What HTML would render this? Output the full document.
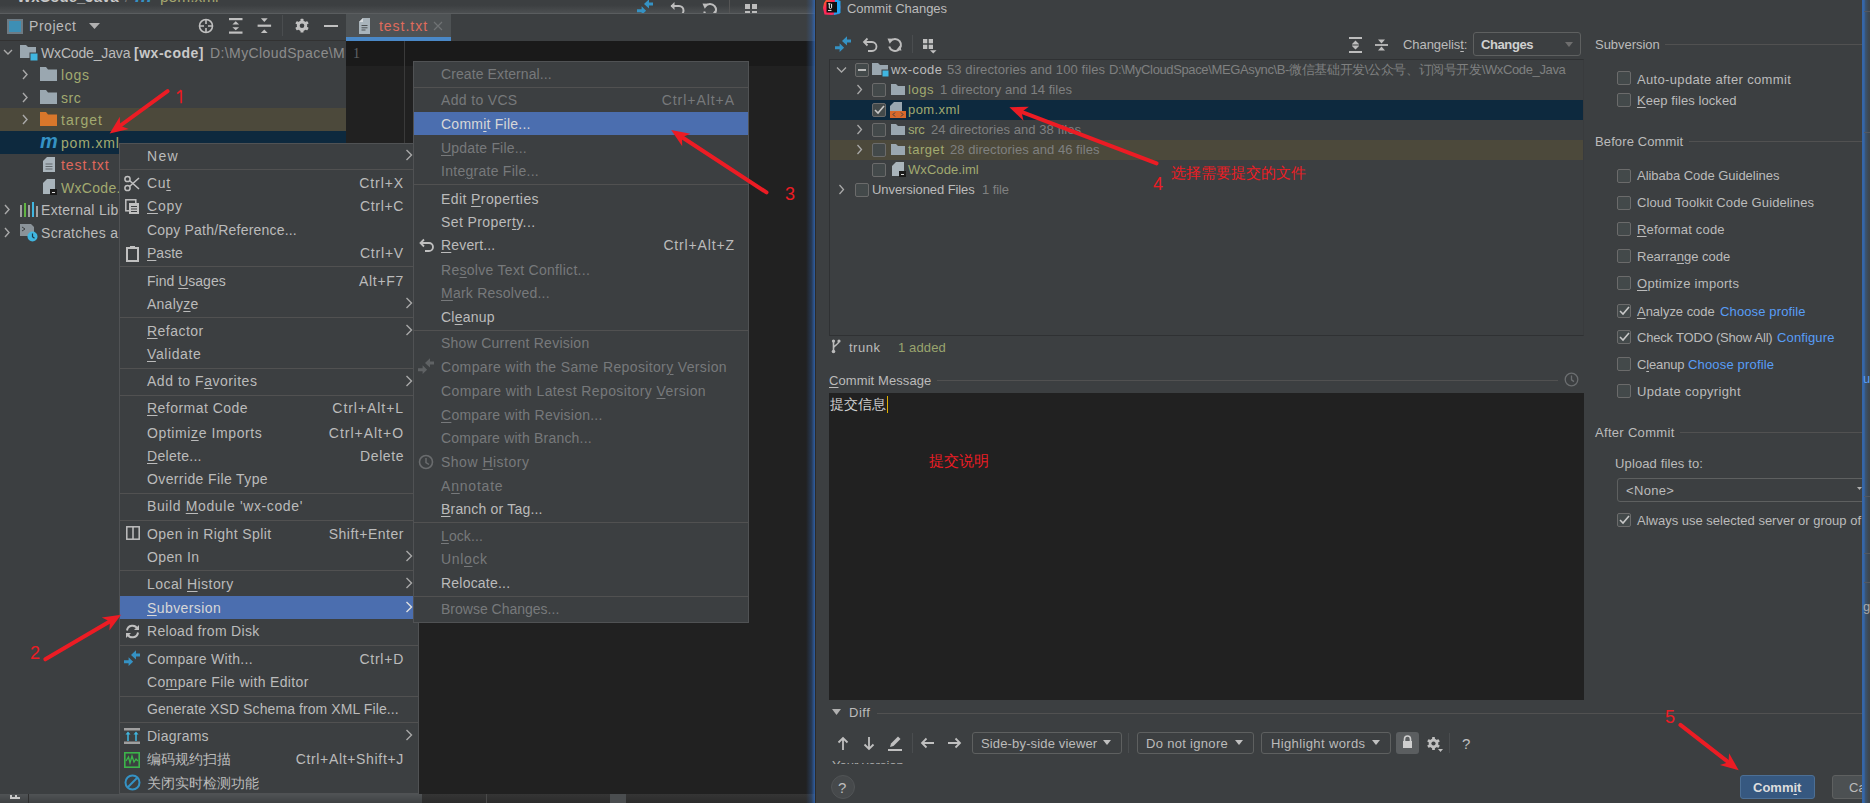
<!DOCTYPE html>
<html><head><meta charset="utf-8">
<style>
*{margin:0;padding:0;box-sizing:border-box}
html,body{width:1870px;height:803px;overflow:hidden;background:#3c3f41}
body{position:relative;font-family:"Liberation Sans",sans-serif;font-size:14px;color:#bbbbbb}
.a{position:absolute}
.t{position:absolute;white-space:nowrap;line-height:18px;height:18px}
.sep{position:absolute;height:1px;background:#515151}
u{text-decoration:underline;text-underline-offset:2px;text-decoration-thickness:1px}
.dis{color:#787b7d}
.sc{position:absolute;white-space:nowrap;line-height:18px;text-align:right}
.cb{position:absolute;width:14px;height:14px;border:1px solid #6b6b6b;border-radius:2px;background:#43494a}
.grn{color:#a2aa70}
.red{color:#e0685c}
.link{color:#589df6}
svg{position:absolute;overflow:visible}
</style></head><body>

<!-- ================= LEFT IDE ================= -->
<div class="a" id="ide" style="left:0;top:0;width:816px;height:803px;background:#3c3f41;overflow:hidden">
  <!-- breadcrumb bar -->
  <div class="a" style="left:0;top:0;width:816px;height:13px;background:linear-gradient(#3c3f41 40%,#4c4f51)"></div>
  <div class="a" style="left:0;top:13px;width:816px;height:1px;background:#5a5d5f"></div>
  <!-- project header -->
  <div class="a" style="left:0;top:14px;width:346px;height:26px;background:#3c3f41"></div>
  <div class="a" style="left:0;top:40px;width:346px;height:1px;background:#323232"></div>
  <!-- tab bar -->
  <div class="a" style="left:346px;top:14px;width:470px;height:27px;background:#3c3f41"></div>
  <div class="a" style="left:346px;top:14px;width:105px;height:24px;background:#4e5254"></div>
  <div class="a" style="left:346px;top:37px;width:105px;height:4px;background:#4a88c7"></div>
  <!-- editor -->
  <div class="a" style="left:346px;top:41px;width:470px;height:753px;background:#212121"></div>
  <div class="a" style="left:346px;top:41px;width:470px;height:25px;background:#1a1a1a"></div>
  <div class="a" style="left:404px;top:41px;width:1px;height:753px;background:#3a3a3a"></div>
  <!-- status bar -->
  <div class="a" style="left:0;top:794px;width:816px;height:9px;background:linear-gradient(#505355,#3e4143)"></div>
  <div class="a" style="left:422px;top:794px;width:394px;height:9px;background:linear-gradient(#353535,#2b2b2b)"></div>
  <div class="a" style="left:486px;top:794px;width:1px;height:9px;background:#4a4a4a"></div>
  <div class="a" style="left:610px;top:794px;width:16px;height:9px;background:#4a4d4f"></div>
  <div class="a" style="left:28px;top:794px;width:1px;height:9px;background:#2e2e2e"></div>
  <div class="a" style="left:10px;top:795px;width:1.5px;height:3px;background:#c8c8c8"></div><div class="a" style="left:15px;top:795px;width:1.5px;height:3px;background:#c8c8c8"></div><div class="a" style="left:10px;top:797px;width:10px;height:1.5px;background:#c8c8c8"></div>

  <!-- breadcrumb text (cut off at top) -->
  <div class="t" style="left:17px;top:-12px;font-weight:bold;color:#c8c8c8;font-size:15px">WxCode_Java</div>
  <div class="t" style="left:125px;top:-12px;color:#7a7a7a">/</div>
  <div class="t" style="left:135px;top:-13px;color:#3592c4;font-weight:bold;font-style:italic;font-size:19px">m</div>
  <div class="t" style="left:160px;top:-12px;color:#a4a66e;font-size:15.5px">pom.xml</div>
  <!-- top right toolbar icons (cut) -->
  <div class="a" style="left:600px;top:0;width:200px;height:13px;overflow:hidden">
  <svg style="left:37px;top:-1px" width="17" height="14"><path d="M7 4.9 L12 0.3 L12 3.5 L16 3.5 L16 6.5 L12 6.5 L12 9.4Z M9.1 11.7 L4.6 7.2 L4.6 10.2 L0 10.2 L0 13.2 L4.6 13.2 L4.6 16Z" fill="#3592c4"/></svg>
  <svg style="left:69px;top:1px" width="16" height="15"><path d="M2 5h8a4.5 4.5 0 0 1 0 9H6" stroke="#bdbdbd" stroke-width="2" fill="none"/><path d="M5.5 1 L1.5 5 L5.5 9z" fill="#bdbdbd"/></svg>
  <svg style="left:102px;top:2px" width="16" height="15"><path d="M3.3 4.2 A6 6 0 1 1 2.2 9.5" stroke="#bdbdbd" stroke-width="2" fill="none"/><path d="M0.5 1.5 L6.5 1.8 L2.8 6.8z" fill="#bdbdbd"/><path d="M14.5 13.5 L9.2 13.3 L12.8 8.6z" fill="#bdbdbd"/></svg>
  <div class="a" style="left:129px;top:0;width:1px;height:13px;background:#555"></div>
  <div class="a" style="left:145px;top:4px;width:5px;height:5px;background:#bdbdbd"></div>
  <div class="a" style="left:152px;top:4px;width:5px;height:5px;background:#bdbdbd"></div>
  <div class="a" style="left:145px;top:11px;width:5px;height:2px;background:#bdbdbd"></div>
  <div class="a" style="left:152px;top:11px;width:5px;height:2px;background:#bdbdbd"></div>

    </div>
  <!-- project header -->
  <div class="a" style="left:7px;top:19px;width:16px;height:15px;border:2px solid #6e7b84;background:#3d8fb5"></div>
  <div class="t" style="left:29px;top:17px;color:#bbbbbb;letter-spacing:0.54px">Project</div>
  <svg style="left:89px;top:23px" width="12" height="8"><path d="M0 0 h11 l-5.5 6z" fill="#b0b0b0"/></svg>
  <svg style="left:198px;top:18px" width="16" height="16"><circle cx="8" cy="8" r="6.5" stroke="#c0c0c0" stroke-width="1.6" fill="none"/><path d="M8 1v5M8 10v5M1 8h5M10 8h5" stroke="#c0c0c0" stroke-width="1.6"/></svg>
  <svg style="left:228px;top:17px" width="16" height="17"><rect x="1" y="1" width="13.5" height="2.2" fill="#c0c0c0"/><rect x="1" y="14.5" width="13.5" height="2.2" fill="#c0c0c0"/><path d="M7.75 4.3L4.4 7.4h6.7zM7.75 13.3L4.4 10.2h6.7z" fill="#c0c0c0"/></svg>
  <svg style="left:257px;top:17px" width="16" height="17"><rect x="0.6" y="7.6" width="13.5" height="2.2" fill="#c0c0c0"/><path d="M3.9 1.3h6.8l-3.4 3.6zM3.9 16h6.8l-3.4-3.6z" fill="#c0c0c0"/></svg>
  <div class="a" style="left:282px;top:15px;width:1px;height:21px;background:#4a4d4f"></div>
  <svg style="left:294px;top:18px" width="16" height="16"><g fill="#c0c0c0"><circle cx="8" cy="7.7" r="5.2"/><rect x="6.5" y="0.8" width="3" height="13.8" rx=".6"/><rect x="6.5" y="0.8" width="3" height="13.8" rx=".6" transform="rotate(60 8 7.7)"/><rect x="6.5" y="0.8" width="3" height="13.8" rx=".6" transform="rotate(120 8 7.7)"/></g><circle cx="8" cy="7.7" r="2.3" fill="#3c3f41"/></svg>
  <div class="a" style="left:324px;top:24.5px;width:14px;height:2.5px;background:#c0c0c0"></div>

  <!-- tab -->
  <svg style="left:359px;top:18px" width="12" height="16"><path d="M4 0h7v16H0V4z" fill="#a9b4bb"/><path d="M0 4h4V0" fill="#d6dadd"/><path d="M2.5 7.5h6M2.5 9.8h6M2.5 12h4" stroke="#4e5254" stroke-width="1"/></svg>
  <div class="t" style="left:379px;top:17px;color:#e06c5c;font-size:14px;letter-spacing:0.97px">test.txt</div>
  <svg style="left:433px;top:21px" width="10" height="10"><path d="M1 1l8 8M9 1l-8 8" stroke="#6f7274" stroke-width="1.2"/></svg>

  <!-- editor line number -->
  <div class="t" style="left:353px;top:45px;color:#606366;font-family:'Liberation Serif',serif;font-size:14px">1</div>

  <!-- tree rows -->
  <div class="a" style="left:0;top:108px;width:346px;height:23px;background:#4c493b"></div>
  <div class="a" style="left:0;top:131px;width:346px;height:23px;background:#0d293e"></div>

  <svg style="left:3px;top:47px" width="10" height="10"><path d="M1 3l4 4 4-4" stroke="#a9a9a9" stroke-width="1.4" fill="none"/></svg>
  <svg style="left:20px;top:44px" width="18" height="17"><path d="M0 1h6l2 2h8v11H0z" fill="#9aa7b0"/><rect x="10" y="9" width="8" height="8" fill="#40b6e0" stroke="#3c3f41" stroke-width="1"/></svg>
  <div class="t" style="left:41px;top:44px;letter-spacing:-0.16px">WxCode_Java</div><div class="t" style="left:134px;top:44px;font-weight:bold;color:#c9c9c9;letter-spacing:0.52px">[wx-code]</div><div class="t" style="left:210px;top:44px;width:136px;overflow:hidden;color:#8c8c8c;letter-spacing:.4px">D:\MyCloudSpace\MEGAsync</div>

  <svg style="left:21px;top:69px" width="8" height="11"><path d="M2 1l4 4.5-4 4.5" stroke="#a9a9a9" stroke-width="1.4" fill="none"/></svg>
  <svg style="left:40px;top:67px" width="17" height="14"><path d="M0 0h6l2 2.5h9V14H0z" fill="#9aa7b0"/></svg>
  <div class="t grn" style="left:61px;top:66px;letter-spacing:0.80px">logs</div>

  <svg style="left:21px;top:92px" width="8" height="11"><path d="M2 1l4 4.5-4 4.5" stroke="#a9a9a9" stroke-width="1.4" fill="none"/></svg>
  <svg style="left:40px;top:90px" width="17" height="14"><path d="M0 0h6l2 2.5h9V14H0z" fill="#9aa7b0"/></svg>
  <div class="t grn" style="left:61px;top:89px;letter-spacing:0.51px">src</div>

  <svg style="left:21px;top:114px" width="8" height="11"><path d="M2 1l4 4.5-4 4.5" stroke="#a9a9a9" stroke-width="1.4" fill="none"/></svg>
  <svg style="left:40px;top:112px" width="17" height="14"><path d="M0 0h6l2 2.5h9V14H0z" fill="#d9772b"/></svg>
  <div class="t grn" style="left:61px;top:111px;letter-spacing:1.02px">target</div>

  <div class="t" style="left:40px;top:131px;color:#3592c4;font-weight:bold;font-style:italic;font-size:20px;line-height:20px;height:20px;letter-spacing:-1px">m</div>
  <div class="t grn" style="left:61px;top:134px;letter-spacing:0.82px">pom.xml</div>

  <svg style="left:43px;top:157px" width="12" height="15"><path d="M4 0h8v15H0V4z" fill="#a9b4bb"/><path d="M2.5 7h7M2.5 9.5h7M2.5 12h7" stroke="#60676b" stroke-width="1"/></svg>
  <div class="t red" style="left:61px;top:156px;letter-spacing:0.91px">test.txt</div>

  <svg style="left:43px;top:179px" width="14" height="16"><path d="M4 0h8v15H0V4z" fill="#a9b4bb"/><rect x="7" y="10" width="7" height="6" fill="#1b1b1b"/><rect x="9" y="13" width="3" height="1" fill="#ddd"/></svg>
  <div class="t grn" style="left:61px;top:179px;letter-spacing:.3px">WxCode.iml</div>

  <svg style="left:3px;top:204px" width="8" height="11"><path d="M2 1l4 4.5-4 4.5" stroke="#a9a9a9" stroke-width="1.4" fill="none"/></svg>
  <svg style="left:20px;top:202px" width="18" height="15"><rect x="0" y="3" width="2" height="12" fill="#a0a0a0"/><rect x="4" y="1" width="2" height="14" fill="#62b543"/><rect x="8" y="3" width="2" height="12" fill="#a0a0a0"/><rect x="12" y="0" width="2" height="15" fill="#40b6e0"/><rect x="16" y="4" width="2" height="11" fill="#a0a0a0"/></svg>
  <div class="t" style="left:41px;top:201px;letter-spacing:.3px">External Libraries</div>

  <svg style="left:3px;top:227px" width="8" height="11"><path d="M2 1l4 4.5-4 4.5" stroke="#a9a9a9" stroke-width="1.4" fill="none"/></svg>
  <svg style="left:20px;top:224px" width="18" height="18"><path d="M0 0h11l3 3v9H0z" fill="#8a9399"/><path d="M2 3l3 2-3 2" stroke="#3c3f41" stroke-width="1" fill="none"/><circle cx="12.5" cy="12.5" r="5" fill="#40b6e0"/><path d="M12.5 9.5v3.2l2 1.5" stroke="#1b3a4a" stroke-width="1.2" fill="none"/></svg>
  <div class="t" style="left:41px;top:224px;letter-spacing:.3px">Scratches and Consoles</div>

<!-- MENUS -->
<div class="a" style="left:119px;top:143px;width:300px;height:651px;background:#3c3f41;border:1px solid #505254"></div>
<div class="t" style="left:147px;top:147px;color:#bbbbbb;letter-spacing:1.29px">New</div>
<svg style="left:405px;top:149px" width="8" height="12"><path d="M1.5 1l5 5-5 5" stroke="#a9a9a9" stroke-width="1.4" fill="none"/></svg>
<div class="sep" style="left:120px;top:169px;width:298px"></div>
<svg style="left:124px;top:175px" width="17" height="17"><circle cx="3.5" cy="13" r="2.6" stroke="#c0c0c0" stroke-width="1.5" fill="none"/><circle cx="3.5" cy="4" r="2.6" stroke="#c0c0c0" stroke-width="1.5" fill="none"/><path d="M5.5 5.5 L15 14 M5.5 11.5 L15 3" stroke="#c0c0c0" stroke-width="1.6"/></svg>
<div class="t" style="left:147px;top:174px;color:#bbbbbb;letter-spacing:0.70px">Cu<u>t</u></div>
<div class="sc" style="right:412px;top:174px;letter-spacing:0.90px">Ctrl+X</div>
<svg style="left:125px;top:199px" width="16" height="16"><rect x="0.8" y="0.8" width="10" height="11" stroke="#c0c0c0" stroke-width="1.5" fill="none"/><rect x="4" y="4" width="10" height="11" fill="#c0c0c0"/><path d="M6 7.5h6M6 10h6M6 12.5h6" stroke="#3c3f41" stroke-width="1"/></svg>
<div class="t" style="left:147px;top:197px;color:#bbbbbb;letter-spacing:0.80px"><u>C</u>opy</div>
<div class="sc" style="right:412px;top:197px;letter-spacing:0.65px">Ctrl+C</div>
<div class="t" style="left:147px;top:221px;color:#bbbbbb;letter-spacing:0.20px">Copy Path/Reference...</div>
<svg style="left:126px;top:246px" width="14" height="16"><rect x="1" y="2" width="11" height="13" stroke="#c0c0c0" stroke-width="2" fill="none"/><rect x="4" y="0" width="5" height="3" fill="#c0c0c0"/></svg>
<div class="t" style="left:147px;top:244px;color:#bbbbbb;letter-spacing:0.02px"><u>P</u>aste</div>
<div class="sc" style="right:412px;top:244px;letter-spacing:0.80px">Ctrl+V</div>
<div class="sep" style="left:120px;top:266px;width:298px"></div>
<div class="t" style="left:147px;top:272px;color:#bbbbbb;letter-spacing:0.01px">Find <u>U</u>sages</div>
<div class="sc" style="right:412px;top:272px;letter-spacing:0.69px">Alt+F7</div>
<div class="t" style="left:147px;top:295px;color:#bbbbbb;letter-spacing:0.25px">Analy<u>z</u>e</div>
<svg style="left:405px;top:297px" width="8" height="12"><path d="M1.5 1l5 5-5 5" stroke="#a9a9a9" stroke-width="1.4" fill="none"/></svg>
<div class="sep" style="left:120px;top:317px;width:298px"></div>
<div class="t" style="left:147px;top:322px;color:#bbbbbb;letter-spacing:0.48px"><u>R</u>efactor</div>
<svg style="left:405px;top:324px" width="8" height="12"><path d="M1.5 1l5 5-5 5" stroke="#a9a9a9" stroke-width="1.4" fill="none"/></svg>
<div class="t" style="left:147px;top:345px;color:#bbbbbb;letter-spacing:0.60px"><u>V</u>alidate</div>
<div class="sep" style="left:120px;top:368px;width:298px"></div>
<div class="t" style="left:147px;top:372px;color:#bbbbbb;letter-spacing:0.53px">Add to F<u>a</u>vorites</div>
<svg style="left:405px;top:375px" width="8" height="12"><path d="M1.5 1l5 5-5 5" stroke="#a9a9a9" stroke-width="1.4" fill="none"/></svg>
<div class="sep" style="left:120px;top:395px;width:298px"></div>
<div class="t" style="left:147px;top:399px;color:#bbbbbb;letter-spacing:0.47px"><u>R</u>eformat Code</div>
<div class="sc" style="right:412px;top:399px;letter-spacing:0.94px">Ctrl+Alt+L</div>
<div class="t" style="left:147px;top:424px;color:#bbbbbb;letter-spacing:0.60px">Optimi<u>z</u>e Imports</div>
<div class="sc" style="right:412px;top:424px;letter-spacing:0.98px">Ctrl+Alt+O</div>
<div class="t" style="left:147px;top:447px;color:#bbbbbb;letter-spacing:0.29px"><u>D</u>elete...</div>
<div class="sc" style="right:412px;top:447px;letter-spacing:0.57px">Delete</div>
<div class="t" style="left:147px;top:470px;color:#bbbbbb;letter-spacing:0.38px">Override File Type</div>
<div class="sep" style="left:120px;top:493px;width:298px"></div>
<div class="t" style="left:147px;top:497px;color:#bbbbbb;letter-spacing:0.62px">Build <u>M</u>odule 'wx-code'</div>
<div class="sep" style="left:120px;top:520px;width:298px"></div>
<svg style="left:126px;top:526px" width="14" height="14"><rect x="0.8" y="0.8" width="12.4" height="12.4" stroke="#c0c0c0" stroke-width="1.5" fill="none"/><path d="M7 1v12" stroke="#c0c0c0" stroke-width="1.5"/></svg>
<div class="t" style="left:147px;top:525px;color:#bbbbbb;letter-spacing:0.41px">Open in Right Split</div>
<div class="sc" style="right:412px;top:525px;letter-spacing:0.52px">Shift+Enter</div>
<div class="t" style="left:147px;top:548px;color:#bbbbbb;letter-spacing:0.38px">Open In</div>
<svg style="left:405px;top:550px" width="8" height="12"><path d="M1.5 1l5 5-5 5" stroke="#a9a9a9" stroke-width="1.4" fill="none"/></svg>
<div class="sep" style="left:120px;top:570px;width:298px"></div>
<div class="t" style="left:147px;top:575px;color:#bbbbbb;letter-spacing:0.44px">Local <u>H</u>istory</div>
<svg style="left:405px;top:577px" width="8" height="12"><path d="M1.5 1l5 5-5 5" stroke="#a9a9a9" stroke-width="1.4" fill="none"/></svg>
<div class="a" style="left:120px;top:596px;width:294px;height:23px;background:#4b6eaf"></div>
<div class="t" style="left:147px;top:599px;color:#d7d7d7;letter-spacing:0.41px"><u>S</u>ubversion</div>
<svg style="left:405px;top:601px" width="8" height="12"><path d="M1.5 1l5 5-5 5" stroke="#e0e0e0" stroke-width="1.4" fill="none"/></svg>
<svg style="left:125px;top:624px" width="15" height="15"><path d="M2 6.5 A5.5 5.5 0 0 1 12.5 5" stroke="#c0c0c0" stroke-width="2" fill="none"/><path d="M13 8.5 A5.5 5.5 0 0 1 2.5 10" stroke="#c0c0c0" stroke-width="2" fill="none"/><path d="M14 1v5h-5z" fill="#c0c0c0"/><path d="M1 14v-5h5z" fill="#c0c0c0"/></svg>
<div class="t" style="left:147px;top:622px;color:#bbbbbb;letter-spacing:0.33px">Reload from Disk</div>
<div class="sep" style="left:120px;top:645px;width:298px"></div>
<svg style="left:124px;top:650px" width="17" height="16"><path d="M7 4.9 L12 0.3 L12 3.5 L16 3.5 L16 6.5 L12 6.5 L12 9.4Z M9.1 11.7 L4.6 7.2 L4.6 10.2 L0 10.2 L0 13.2 L4.6 13.2 L4.6 16Z" fill="#3592c4"/></svg>
<div class="t" style="left:147px;top:650px;color:#bbbbbb;letter-spacing:0.32px">Compare With...</div>
<div class="sc" style="right:412px;top:650px;letter-spacing:0.75px">Ctrl+D</div>
<div class="t" style="left:147px;top:673px;color:#bbbbbb;letter-spacing:0.35px">Co<u>m</u>pare File with Editor</div>
<div class="sep" style="left:120px;top:696px;width:298px"></div>
<div class="t" style="left:147px;top:700px;color:#bbbbbb;letter-spacing:0.09px">Generate XSD Schema from XML File...</div>
<div class="sep" style="left:120px;top:722px;width:298px"></div>
<svg style="left:124px;top:728px" width="16" height="16"><rect x="0" y="0" width="16" height="2.5" fill="#a0a0a0"/><rect x="0" y="13.5" width="16" height="2.5" fill="#a0a0a0"/><path d="M4 13V5M12 13V5" stroke="#40b6e0" stroke-width="1.5"/><path d="M1.5 6.5L4 3.5l2.5 3zM9.5 6.5L12 3.5l2.5 3z" fill="#40b6e0"/></svg>
<div class="t" style="left:147px;top:727px;color:#bbbbbb;letter-spacing:0.24px">Diagrams</div>
<svg style="left:405px;top:729px" width="8" height="12"><path d="M1.5 1l5 5-5 5" stroke="#a9a9a9" stroke-width="1.4" fill="none"/></svg>
<svg style="left:124px;top:752px" width="16" height="16"><rect x="0.8" y="0.8" width="14.4" height="14.4" stroke="#3cb44a" stroke-width="1.6" fill="none"/><path d="M2 9 L4.5 5 L6 11 L8 4 L10 10 L12 7 L14 9" stroke="#3cb44a" stroke-width="1.3" fill="none"/></svg>
<div class="t" style="left:147px;top:750px;color:#bbbbbb">编码规约扫描</div>
<div class="sc" style="right:412px;top:750px;letter-spacing:0.67px">Ctrl+Alt+Shift+J</div>
<svg style="left:124px;top:774px" width="17" height="17"><circle cx="8.5" cy="8.5" r="7" stroke="#3592c4" stroke-width="2" fill="none"/><path d="M13.5 3.5 L3.5 13.5" stroke="#3592c4" stroke-width="2"/></svg>
<div class="t" style="left:147px;top:774px;color:#bbbbbb">关闭实时检测功能</div>
<div class="a" style="left:413px;top:61px;width:336px;height:562px;background:#3c3f41;border:1px solid #505254"></div>
<div class="t" style="left:441px;top:65px;color:#77797b;letter-spacing:0.10px">Create External...</div>
<div class="sep" style="left:414px;top:87px;width:334px"></div>
<div class="t" style="left:441px;top:91px;color:#77797b;letter-spacing:0.34px">Add to VCS</div>
<div class="sc" style="right:81px;top:91px;letter-spacing:0.95px;color:#77797b">Ctrl+Alt+A</div>
<div class="a" style="left:414px;top:112px;width:334px;height:23px;background:#4b6eaf"></div>
<div class="t" style="left:441px;top:115px;color:#d7d7d7;letter-spacing:0.24px">Comm<u>i</u>t File...</div>
<div class="t" style="left:441px;top:139px;color:#77797b;letter-spacing:0.19px"><u>U</u>pdate File...</div>
<div class="t" style="left:441px;top:162px;color:#77797b;letter-spacing:0.27px">Inte<u>g</u>rate File...</div>
<div class="sep" style="left:414px;top:184px;width:334px"></div>
<div class="t" style="left:441px;top:190px;color:#bbbbbb;letter-spacing:0.41px">Edit <u>P</u>roperties</div>
<div class="t" style="left:441px;top:213px;color:#bbbbbb;letter-spacing:0.40px">Set Proper<u>t</u>y...</div>
<svg style="left:419px;top:238px" width="16" height="14"><path d="M2 5h8a4 4 0 0 1 0 8H6" stroke="#c0c0c0" stroke-width="1.8" fill="none"/><path d="M5 1.5 L1.5 5 L5 8.5" stroke="#c0c0c0" stroke-width="1.8" fill="none"/></svg>
<div class="t" style="left:441px;top:236px;color:#bbbbbb;letter-spacing:0.17px"><u>R</u>evert...</div>
<div class="sc" style="right:81px;top:236px;letter-spacing:0.86px;color:#bbbbbb">Ctrl+Alt+Z</div>
<div class="t" style="left:441px;top:261px;color:#77797b;letter-spacing:0.29px">Re<u>s</u>olve Text Conflict...</div>
<div class="t" style="left:441px;top:284px;color:#77797b;letter-spacing:0.24px"><u>M</u>ark Resolved...</div>
<div class="t" style="left:441px;top:308px;color:#bbbbbb;letter-spacing:0.22px">Cl<u>e</u>anup</div>
<div class="sep" style="left:414px;top:330px;width:334px"></div>
<div class="t" style="left:441px;top:334px;color:#77797b;letter-spacing:0.25px">Show Current Revision</div>
<svg style="left:418px;top:358px" width="17" height="16"><path d="M7 4.9 L12 0.3 L12 3.5 L16 3.5 L16 6.5 L12 6.5 L12 9.4Z M9.1 11.7 L4.6 7.2 L4.6 10.2 L0 10.2 L0 13.2 L4.6 13.2 L4.6 16Z" fill="#5f6264"/></svg>
<div class="t" style="left:441px;top:358px;color:#77797b;letter-spacing:0.36px">Compare with the Same Repositor<u>y</u> Version</div>
<div class="t" style="left:441px;top:382px;color:#77797b;letter-spacing:0.40px">Compare with Latest Repository <u>V</u>ersion</div>
<div class="t" style="left:441px;top:406px;color:#77797b;letter-spacing:0.25px"><u>C</u>ompare with Revision...</div>
<div class="t" style="left:441px;top:429px;color:#77797b;letter-spacing:0.21px">Compare with Branch...</div>
<svg style="left:418px;top:454px" width="16" height="16"><circle cx="8" cy="8" r="6.5" stroke="#6a6c6e" stroke-width="1.6" fill="none"/><path d="M8 4v4.5l3 2" stroke="#6a6c6e" stroke-width="1.5" fill="none"/></svg>
<div class="t" style="left:441px;top:453px;color:#77797b;letter-spacing:0.49px">Show <u>H</u>istory</div>
<div class="t" style="left:441px;top:477px;color:#77797b;letter-spacing:0.80px">A<u>n</u>notate</div>
<div class="t" style="left:441px;top:500px;color:#bbbbbb;letter-spacing:0.19px"><u>B</u>ranch or Tag...</div>
<div class="sep" style="left:414px;top:522px;width:334px"></div>
<div class="t" style="left:441px;top:527px;color:#77797b;letter-spacing:0.09px"><u>L</u>ock...</div>
<div class="t" style="left:441px;top:550px;color:#77797b;letter-spacing:0.66px">Unl<u>o</u>ck</div>
<div class="t" style="left:441px;top:574px;color:#bbbbbb;letter-spacing:0.21px">Relocate...</div>
<div class="sep" style="left:414px;top:596px;width:334px"></div>
<div class="t" style="left:441px;top:600px;color:#77797b;letter-spacing:0.00px">Browse Changes...</div>
<!-- /MENUS -->
  <!-- blue glow right edge -->
  <div class="a" style="left:806px;top:0;width:9px;height:803px;background:linear-gradient(90deg,rgba(50,100,175,0),rgba(50,100,175,.35) 60%,rgba(50,105,185,.85))"></div>
  <div class="a" style="left:815px;top:0;width:1px;height:803px;background:#2b2b2b"></div>
</div>

<!-- ================= RIGHT DIALOG ================= -->
<div class="a" style="left:816px;top:0;width:1054px;height:803px;background:#3c3f41"></div>
<!-- title -->
<svg style="left:823px;top:-1px" width="18" height="17"><defs><linearGradient id="ijg" x1="0" y1="0" x2="1" y2="1"><stop offset="0" stop-color="#f97a12"/><stop offset=".35" stop-color="#fe2857"/><stop offset=".7" stop-color="#fe2857"/><stop offset="1" stop-color="#087cfa"/></linearGradient></defs><path d="M3 1 L9 0 L16 1.5 L17.5 8 L16.5 15 L9 16 L1.5 15.5 L0 9 L1 4z" fill="url(#ijg)"/><path d="M12 0 L17.5 2 L17.5 14 L11 16z" fill="#21a3f0"/><rect x="3.5" y="3" width="10.5" height="10.5" fill="#111"/><path d="M5.2 4.8h2.2M6.3 4.8v4.2M8.6 4.8v3.6a1.3 1.3 0 0 1-2.2 .9" stroke="#f0f0f0" stroke-width="1" fill="none"/><rect x="5" y="11" width="3.5" height="1" fill="#d0d0d0"/></svg>
<div class="t" style="left:847px;top:0px;font-size:13px;color:#bbbbbb;letter-spacing:-0.03px">Commit Changes</div>

<!-- toolbar -->
<svg style="left:835px;top:36px" width="17" height="16"><path d="M7 4.9 L12 0.3 L12 3.5 L16 3.5 L16 6.5 L12 6.5 L12 9.4Z M9.1 11.7 L4.6 7.2 L4.6 10.2 L0 10.2 L0 13.2 L4.6 13.2 L4.6 16Z" fill="#3592c4"/></svg>
<svg style="left:862px;top:37px" width="16" height="15"><path d="M2 5h8a4.5 4.5 0 0 1 0 9H6" stroke="#bdbdbd" stroke-width="1.8" fill="none"/><path d="M5.5 1.5 L2 5 L5.5 8.5" stroke="#bdbdbd" stroke-width="1.8" fill="none"/></svg>
<svg style="left:887px;top:37px" width="16" height="15"><path d="M3.3 4.2 A6 6 0 1 1 2.2 9.5" stroke="#bdbdbd" stroke-width="2" fill="none"/><path d="M0.5 1.5 L6.5 1.8 L2.8 6.8z" fill="#bdbdbd"/><path d="M14.5 13.5 L9.2 13.3 L12.8 8.6z" fill="#bdbdbd"/></svg>
<div class="a" style="left:912px;top:35px;width:1px;height:18px;background:#4a4d4f"></div>
<svg style="left:923px;top:39px" width="15" height="15"><g fill="#c0c0c0"><rect x="0" y="0" width="4.3" height="4.3"/><rect x="5.7" y="0" width="4.3" height="4.3"/><rect x="0" y="5.7" width="4.3" height="4.3"/><rect x="5.7" y="5.7" width="4.3" height="4.3"/><path d="M7 11.2h6.5l-3.25 3.3z"/></g></svg>

<svg style="left:1349px;top:37px" width="14" height="16"><path d="M0 1h13M0 15h13" stroke="#bdbdbd" stroke-width="1.8"/><path d="M6.5 3.5l-3.5 3.5h7zM6.5 12.5l-3.5-3.5h7z" fill="#bdbdbd"/><path d="M3 8h7" stroke="#bdbdbd" stroke-width="1"/></svg>
<svg style="left:1375px;top:37px" width="14" height="16"><path d="M0 8h13" stroke="#bdbdbd" stroke-width="1.8"/><path d="M6.5 6.5l-3.5-4h7zM6.5 9.5l-3.5 4h7z" fill="#bdbdbd"/></svg>
<div class="t" style="left:1403px;top:36px;font-size:13px;letter-spacing:-0.06px">Changelis<u>t</u>:</div>
<div class="a" style="left:1473px;top:32px;width:108px;height:24px;border:1px solid #5e6060;border-radius:3px;background:#3c3f41"></div>
<div class="t" style="left:1481px;top:36px;font-size:13px;font-weight:bold;color:#d0d0d0;letter-spacing:-0.40px">Changes</div>
<svg style="left:1565px;top:42px" width="9" height="6"><path d="M0 0h8l-4 5z" fill="#6e6e6e"/></svg>

<!-- tree panel -->
<div class="a" style="left:829px;top:59px;width:755px;height:277px;border:1px solid #2f3133;border-right-color:#393b3d"></div>
<div class="a" style="left:830px;top:100px;width:753px;height:20px;background:#0d293e"></div>
<div class="a" style="left:830px;top:140px;width:753px;height:20px;background:#4c493b"></div>

<svg style="left:836px;top:66px" width="11" height="8"><path d="M1 1.5l4.5 4.5 4.5-4.5" stroke="#a9a9a9" stroke-width="1.3" fill="none"/></svg>
<div class="cb" style="left:855px;top:63px"></div><div class="a" style="left:858px;top:69px;width:8px;height:2px;background:#bbbbbb"></div>
<svg style="left:872px;top:62px" width="18" height="16"><path d="M0 1h6l2 2h8v10H0z" fill="#9aa7b0"/><rect x="10" y="8" width="7" height="7" fill="#40b6e0" stroke="#3c3f41" stroke-width="1"/></svg>
<div class="t" style="left:891px;top:61px;font-size:13px;letter-spacing:0.43px">wx-code</div><div class="t" style="left:947px;top:61px;font-size:13px;color:#7f8080;letter-spacing:0.10px">53 directories and 100 files</div><div class="t" style="left:1109px;top:61px;font-size:13px;color:#7f8080;letter-spacing:-0.37px">D:\MyCloudSpace\MEGAsync\B-微信基础开发\公众号、订阅号开发\WxCode_Java</div>

<svg style="left:856px;top:84px" width="7" height="11"><path d="M1.5 1l4 4.5-4 4.5" stroke="#a9a9a9" stroke-width="1.3" fill="none"/></svg>
<div class="cb" style="left:872px;top:83px"></div>
<svg style="left:891px;top:84px" width="14" height="11"><path d="M0 0h5l2 2h7V11H0z" fill="#9aa7b0"/></svg>
<div class="t grn" style="left:908px;top:81px;font-size:13px;letter-spacing:0.51px">logs</div><div class="t" style="left:940px;top:81px;font-size:13px;color:#7f8080;letter-spacing:0.05px">1 directory and 14 files</div>

<div class="cb" style="left:872px;top:103px"></div>
<svg style="left:874px;top:105px" width="11" height="10"><path d="M1 5l3 3 6-7" stroke="#c8c8c8" stroke-width="1.6" fill="none"/></svg>
<svg style="left:890px;top:102px" width="16" height="16"><path d="M4 0h8v10H0V4z" fill="#9aa7b0"/><rect x="0" y="9" width="16" height="7" fill="#d9692b"/><path d="M5 10.5l-2 2 2 2M11 10.5l2 2-2 2" stroke="#3c3f41" stroke-width="1" fill="none"/></svg>
<div class="t grn" style="left:908px;top:101px;font-size:13px;letter-spacing:0.40px">pom.xml</div>

<svg style="left:856px;top:124px" width="7" height="11"><path d="M1.5 1l4 4.5-4 4.5" stroke="#a9a9a9" stroke-width="1.3" fill="none"/></svg>
<div class="cb" style="left:872px;top:123px"></div>
<svg style="left:891px;top:124px" width="14" height="11"><path d="M0 0h5l2 2h7V11H0z" fill="#9aa7b0"/></svg>
<div class="t grn" style="left:908px;top:121px;font-size:13px;letter-spacing:-0.32px">src</div><div class="t" style="left:931px;top:121px;font-size:13px;color:#7f8080;letter-spacing:0.07px">24 directories and 38 files</div>

<svg style="left:856px;top:144px" width="7" height="11"><path d="M1.5 1l4 4.5-4 4.5" stroke="#a9a9a9" stroke-width="1.3" fill="none"/></svg>
<div class="cb" style="left:872px;top:143px"></div>
<svg style="left:891px;top:144px" width="14" height="11"><path d="M0 0h5l2 2h7V11H0z" fill="#9aa7b0"/></svg>
<div class="t grn" style="left:908px;top:141px;font-size:13px;letter-spacing:0.55px">target</div><div class="t" style="left:950px;top:141px;font-size:13px;color:#7f8080;letter-spacing:0.05px">28 directories and 46 files</div>

<div class="cb" style="left:872px;top:163px"></div>
<svg style="left:892px;top:162px" width="14" height="16"><path d="M4 0h8v14H0V4z" fill="#a9b4bb"/><rect x="7" y="9" width="7" height="6" fill="#1b1b1b"/><rect x="9" y="12" width="3" height="1" fill="#ddd"/></svg>
<div class="t grn" style="left:908px;top:161px;font-size:13px;letter-spacing:0.07px">WxCode.iml</div>

<svg style="left:838px;top:184px" width="7" height="11"><path d="M1.5 1l4 4.5-4 4.5" stroke="#a9a9a9" stroke-width="1.3" fill="none"/></svg>
<div class="cb" style="left:855px;top:183px"></div>
<div class="t" style="left:872px;top:181px;font-size:13px;letter-spacing:-0.08px">Unversioned Files</div><div class="t" style="left:982px;top:181px;font-size:13px;color:#7f8080;letter-spacing:-0.09px">1 file</div>

<!-- trunk -->
<svg style="left:831px;top:339px" width="10" height="15"><circle cx="2.5" cy="12.5" r="1.8" fill="#bbb"/><path d="M2.5 1v10M2.5 9 C2.5 6 8 6 8 2" stroke="#bbb" stroke-width="1.6" fill="none"/><circle cx="2.5" cy="2" r="1.6" fill="#bbb"/><circle cx="8" cy="2" r="1.6" fill="#bbb"/></svg>
<div class="t" style="left:849px;top:339px;font-size:13px;letter-spacing:0.50px">trunk</div>
<div class="t" style="left:898px;top:339px;font-size:13px;color:#9aa56e;letter-spacing:0.13px">1 added</div>

<!-- commit message -->
<div class="t" style="left:829px;top:372px;font-size:13px;letter-spacing:0.09px"><u>C</u>ommit Message</div>
<div class="a" style="left:937px;top:380px;width:621px;height:1px;background:#515151"></div>
<svg style="left:1564px;top:372px" width="15" height="15"><circle cx="7.5" cy="7.5" r="6.3" stroke="#6b6e70" stroke-width="1.3" fill="none"/><path d="M7.5 3.5v4.3l2.5 1.8" stroke="#6b6e70" stroke-width="1.3" fill="none"/></svg>
<div class="a" style="left:829px;top:393px;width:755px;height:307px;background:#212121"></div>
<div class="t" style="left:830px;top:396px;font-size:14px;color:#d0d0d0;font-family:'Liberation Serif',serif">提交信息</div>
<div class="a" style="left:887px;top:396px;width:1px;height:17px;background:#e0b000"></div>

<!-- diff -->
<svg style="left:832px;top:709px" width="10" height="7"><path d="M0 0h9l-4.5 6z" fill="#b0b0b0"/></svg>
<div class="t" style="left:849px;top:704px;font-size:13px;letter-spacing:0.51px">Diff</div>
<div class="a" style="left:877px;top:713px;width:985px;height:1px;background:#515151"></div>

<svg style="left:837px;top:736px" width="12" height="15"><path d="M6 14V2M1.5 6.5L6 2l4.5 4.5" stroke="#c0c0c0" stroke-width="1.8" fill="none"/></svg>
<svg style="left:863px;top:736px" width="12" height="15"><path d="M6 1v12M1.5 8.5L6 13l4.5-4.5" stroke="#c0c0c0" stroke-width="1.8" fill="none"/></svg>
<svg style="left:888px;top:735px" width="15" height="16"><path d="M2 12l1-3.5 7-7 2.5 2.5-7 7z" fill="#c0c0c0"/><rect x="0" y="14" width="14" height="2" fill="#c0c0c0"/></svg>
<div class="a" style="left:912px;top:733px;width:1px;height:20px;background:#4a4d4f"></div>
<svg style="left:920px;top:737px" width="15" height="12"><path d="M14 6H2M6.5 1.5L2 6l4.5 4.5" stroke="#c0c0c0" stroke-width="1.8" fill="none"/></svg>
<svg style="left:947px;top:737px" width="15" height="12"><path d="M1 6h12M8.5 1.5L13 6l-4.5 4.5" stroke="#c0c0c0" stroke-width="1.8" fill="none"/></svg>

<div class="a" style="left:972px;top:732px;width:150px;height:22px;border:1px solid #5e6060;border-radius:3px"></div>
<div class="t" style="left:981px;top:735px;font-size:13px;letter-spacing:0.15px">Side-by-side viewer</div>
<svg style="left:1103px;top:740px" width="9" height="6"><path d="M0 0h8l-4 5z" fill="#c0c0c0"/></svg>
<div class="a" style="left:1128px;top:733px;width:1px;height:20px;background:#4a4d4f"></div>
<div class="a" style="left:1137px;top:732px;width:117px;height:22px;border:1px solid #5e6060;border-radius:3px"></div>
<div class="t" style="left:1146px;top:735px;font-size:13px;letter-spacing:0.31px">Do not ignore</div>
<svg style="left:1235px;top:740px" width="9" height="6"><path d="M0 0h8l-4 5z" fill="#c0c0c0"/></svg>
<div class="a" style="left:1261px;top:732px;width:130px;height:22px;border:1px solid #5e6060;border-radius:3px"></div>
<div class="t" style="left:1271px;top:735px;font-size:13px;letter-spacing:0.37px">Highlight words</div>
<svg style="left:1372px;top:740px" width="9" height="6"><path d="M0 0h8l-4 5z" fill="#c0c0c0"/></svg>
<div class="a" style="left:1396px;top:732px;width:23px;height:22px;border-radius:3px;background:#5b5e60"></div>
<svg style="left:1402px;top:735px" width="11" height="14"><path d="M2.5 6V4a3 3 0 0 1 6 0v2" stroke="#cfcfcf" stroke-width="1.6" fill="none"/><rect x="1" y="6" width="9" height="7" fill="#cfcfcf"/></svg>
<svg style="left:1426px;top:736px" width="17" height="17"><g fill="#c0c0c0"><circle cx="7.5" cy="7.5" r="4.8"/><rect x="6.1" y="1" width="2.8" height="13" rx=".5"/><rect x="6.1" y="1" width="2.8" height="13" rx=".5" transform="rotate(60 7.5 7.5)"/><rect x="6.1" y="1" width="2.8" height="13" rx=".5" transform="rotate(120 7.5 7.5)"/></g><circle cx="7.5" cy="7.5" r="2.1" fill="#3c3f41"/><path d="M12 13h5l-2.5 3z" fill="#c0c0c0"/></svg>
<div class="a" style="left:1449px;top:733px;width:1px;height:20px;background:#4a4d4f"></div>
<div class="t" style="left:1462px;top:735px;font-size:15px;color:#c0c0c0">?</div>
<div class="t" style="left:832px;top:757px;font-size:13px;height:7px;overflow:hidden;color:#b0b0b0">Your version</div>

<!-- help -->
<div class="a" style="left:831px;top:775px;width:24px;height:24px;border-radius:50%;background:#46494b;border:1px solid #515456"></div>
<div class="t" style="left:838px;top:779px;font-size:15px;color:#bdbdbd">?</div>

<!-- buttons -->
<div class="a" style="left:1740px;top:775px;width:75px;height:24px;border-radius:3px;background:#365880;border:1px solid #4c6f95"></div>
<div class="t" style="left:1753px;top:779px;font-size:13px;font-weight:bold;color:#dddddd;letter-spacing:-0.00px">Comm<u>i</u>t</div>
<div class="a" style="left:1832px;top:775px;width:60px;height:24px;border-radius:3px;background:#4c5052;border:1px solid #5e6060"></div>
<div class="t" style="left:1849px;top:779px;font-size:13px;color:#bbbbbb">Cancel</div>

<!-- right column -->
<div class="t" style="left:1595px;top:36px;font-size:13px;letter-spacing:-0.03px">Subversion</div>
<div class="a" style="left:1665px;top:44px;width:197px;height:1px;background:#515151"></div>
<div class="cb" style="left:1617px;top:71px"></div>
<div class="t" style="left:1637px;top:71px;font-size:13px;letter-spacing:0.34px">Auto-update after commit</div>
<div class="cb" style="left:1617px;top:93px"></div>
<div class="t" style="left:1637px;top:92px;font-size:13px;letter-spacing:0.07px"><u>K</u>eep files locked</div>

<div class="t" style="left:1595px;top:133px;font-size:13px;letter-spacing:0.12px">Before Commit</div>
<div class="a" style="left:1689px;top:141px;width:173px;height:1px;background:#515151"></div>
<div class="cb" style="left:1617px;top:169px"></div>
<div class="t" style="left:1637px;top:167px;font-size:13px;letter-spacing:-0.03px">Alibaba Code Guidelines</div>
<div class="cb" style="left:1617px;top:196px"></div>
<div class="t" style="left:1637px;top:194px;font-size:13px;letter-spacing:0.11px">Cloud Toolkit Code Guidelines</div>
<div class="cb" style="left:1617px;top:222px"></div>
<div class="t" style="left:1637px;top:221px;font-size:13px;letter-spacing:0.19px"><u>R</u>eformat code</div>
<div class="cb" style="left:1617px;top:249px"></div>
<div class="t" style="left:1637px;top:248px;font-size:13px;letter-spacing:-0.01px">Rearra<u>n</u>ge code</div>
<div class="cb" style="left:1617px;top:276px"></div>
<div class="t" style="left:1637px;top:275px;font-size:13px;letter-spacing:0.30px"><u>O</u>ptimize imports</div>
<div class="cb" style="left:1617px;top:304px"></div>
<svg style="left:1619px;top:306px" width="11" height="10"><path d="M1 5l3 3 6-7" stroke="#c8c8c8" stroke-width="1.6" fill="none"/></svg>
<div class="t" style="left:1637px;top:303px;font-size:13px;letter-spacing:-0.03px"><u>A</u>nalyze code</div><div class="t link" style="left:1720px;top:303px;font-size:13px;letter-spacing:0.13px">Choose profile</div>
<div class="cb" style="left:1617px;top:330px"></div>
<svg style="left:1619px;top:332px" width="11" height="10"><path d="M1 5l3 3 6-7" stroke="#c8c8c8" stroke-width="1.6" fill="none"/></svg>
<div class="t" style="left:1637px;top:329px;font-size:13px;letter-spacing:-0.20px">Check TODO (Show All)</div><div class="t link" style="left:1777px;top:329px;font-size:13px;letter-spacing:0.13px">Configure</div>
<div class="cb" style="left:1617px;top:357px"></div>
<div class="t" style="left:1637px;top:356px;font-size:13px;letter-spacing:-0.14px">C<u>l</u>eanup</div><div class="t link" style="left:1688px;top:356px;font-size:13px;letter-spacing:0.17px">Choose profile</div>
<div class="cb" style="left:1617px;top:384px"></div>
<div class="t" style="left:1637px;top:383px;font-size:13px;letter-spacing:0.35px">Update copyright</div>

<div class="t" style="left:1595px;top:424px;font-size:13px;letter-spacing:0.31px">After Commit</div>
<div class="a" style="left:1680px;top:432px;width:182px;height:1px;background:#515151"></div>
<div class="t" style="left:1615px;top:455px;font-size:13px;letter-spacing:0.13px">Upload files to:</div>
<div class="a" style="left:1617px;top:478px;width:260px;height:24px;border:1px solid #5e6060;border-radius:3px"></div>
<div class="t" style="left:1626px;top:482px;font-size:13px;letter-spacing:0.33px">&lt;None&gt;</div>
<div class="cb" style="left:1617px;top:513px"></div>
<svg style="left:1619px;top:515px" width="11" height="10"><path d="M1 5l3 3 6-7" stroke="#c8c8c8" stroke-width="1.6" fill="none"/></svg>
<div class="t" style="left:1637px;top:512px;font-size:13px">Always use selected server or group of servers</div>

<!-- right edge strip -->
<svg style="left:1857px;top:487px" width="6" height="4"><path d="M0 0h5l-2.5 3z" fill="#b0b0b0"/></svg>
<div class="a" style="left:1862px;top:0;width:8px;height:803px;background:linear-gradient(90deg,#3566a8 0,#3566a8 2px,#3a5472 3.5px,#3d4954 6px,#3e444a 8px)"></div>
<div class="a" style="left:1864px;top:11px;width:6px;height:1px;background:#525861"></div>
<div class="a" style="left:1864px;top:132px;width:6px;height:1px;background:#525861"></div>
<div class="a" style="left:1864px;top:496px;width:6px;height:1px;background:#525861"></div>
<div class="a" style="left:1864px;top:553px;width:6px;height:1px;background:#525861"></div>
<div class="a" style="left:1864px;top:582px;width:6px;height:1px;background:#525861"></div>
<div class="t" style="left:1863px;top:598px;width:7px;overflow:hidden;font-size:13px;color:#a8a8a8">gn</div>
<div class="t" style="left:1863px;top:370px;width:7px;overflow:hidden;font-size:13px;color:#589df6">ur</div>

<svg style="left:0;top:0;pointer-events:none" width="1870" height="803"><path d="M167.6 91.2 L118.4 127.0" stroke="#ec1c24" stroke-width="4" stroke-linecap="round"/><path d="M109.7 133.4 L119.8 116.7 L120.2 125.8 L128.7 128.9Z" fill="#ec1c24"/><path d="M45.3 659.3 L111.8 620.3" stroke="#ec1c24" stroke-width="4" stroke-linecap="round"/><path d="M121.1 614.8 L109.4 630.4 L109.9 621.4 L101.8 617.4Z" fill="#ec1c24"/><path d="M766.5 192.4 L680.2 136.0" stroke="#ec1c24" stroke-width="4" stroke-linecap="round"/><path d="M671.2 130.1 L690.4 133.7 L682.0 137.2 L682.2 146.2Z" fill="#ec1c24"/><path d="M1156.6 163.4 L1019.5 111.1" stroke="#ec1c24" stroke-width="4" stroke-linecap="round"/><path d="M1009.4 107.3 L1028.9 106.7 L1021.5 111.9 L1023.5 120.7Z" fill="#ec1c24"/><path d="M1680.4 724.9 L1730.2 763.6" stroke="#ec1c24" stroke-width="4" stroke-linecap="round"/><path d="M1738.7 770.2 L1719.9 765.1 L1728.5 762.2 L1729.1 753.2Z" fill="#ec1c24"/></svg>
<svg style="left:176px;top:89px" width="8" height="16"><path d="M5.3 1.2V14.2M5.3 1.2 L1.3 4.6" stroke="#ec1c24" stroke-width="1.7" fill="none"/></svg>
<div class="t" style="left:30px;top:643px;font-size:18px;line-height:20px;height:20px;color:#ec1c24">2</div>
<div class="t" style="left:785px;top:184px;font-size:18px;line-height:20px;height:20px;color:#ec1c24">3</div>
<div class="t" style="left:1153px;top:174px;font-size:18px;line-height:20px;height:20px;color:#ec1c24">4</div>
<div class="t" style="left:1665px;top:707px;font-size:18px;line-height:20px;height:20px;color:#ec1c24">5</div>
<div class="t" style="left:1171px;top:163px;font-size:15px;line-height:20px;height:20px;color:#ec1c24">选择需要提交的文件</div>
<div class="t" style="left:929px;top:451px;font-size:15px;line-height:20px;height:20px;color:#ec1c24">提交说明</div>

</body></html>
